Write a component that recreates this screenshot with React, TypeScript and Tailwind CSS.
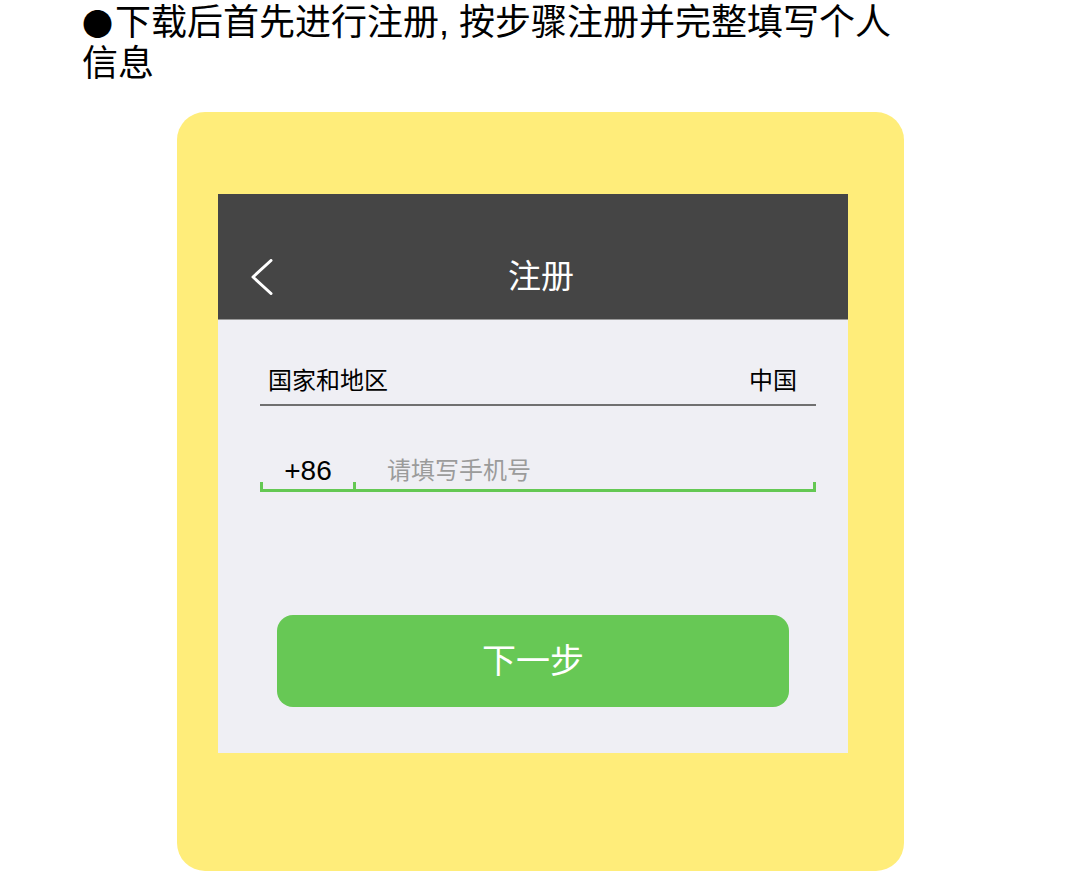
import React from 'react';

const cjk = "font-['Liberation_Sans','Noto_Sans_CJK_SC',sans-serif]";

function BackIcon() {
  return (
    <svg width="24" height="36" viewBox="0 0 24 36" fill="none" className="block">
      <polyline
        points="21,1.5 3,18 21,34.5"
        stroke="#ffffff"
        strokeWidth="3"
        strokeLinecap="round"
        strokeLinejoin="round"
      />
    </svg>
  );
}

export default function App() {
  return (
    <div className={`w-[1080px] h-[876px] bg-white overflow-hidden ${cjk}`}>
      {/* intro line */}
      <p className="pl-[82px] pt-[2px] w-[900px] h-[84px] text-[36px] leading-[41px] text-black">
        <span className="font-['Noto_Sans_CJK_SC',sans-serif] text-[31px] leading-none mr-[2px]">●</span>下载后首先进行注册, 按步骤注册并完整填写个人信息
      </p>

      {/* yellow frame */}
      <div className="ml-[177px] mt-[28px] w-[727px] h-[759px] rounded-[28px] bg-[#ffed7a] pl-[41px] pt-[82px]">
        <div className="w-[630px] h-[559px] bg-[#efeff4] flex flex-col">
          {/* nav bar */}
          <div className="h-[126px] bg-[#454545] border-b border-[#9a9a9a] pt-[40px]">
            <div className="h-[85px] flex items-center relative">
              <div className="pl-[32px]">
                <BackIcon />
              </div>
              <div className="absolute inset-0 pl-[16px] flex items-center justify-center text-white text-[33px] leading-none">
                注册
              </div>
            </div>
          </div>

          {/* country row */}
          <div className="ml-[42px] mr-[32px] mt-[46px] border-b-2 border-[#707070] pb-[8px] flex justify-between text-[24px] leading-[30px] text-black">
            <span className="pl-[8px]">国家和地区</span>
            <span className="pr-[19px]">中国</span>
          </div>

          {/* phone row */}
          <div className="ml-[42px] mr-[32px] mt-[50px]">
            <div className="flex items-center h-[30px]">
              <span className="w-[96px] text-center text-[28px] leading-[30px] text-black">+86</span>
              <span className="pl-[31px] text-[24px] leading-[30px] text-[#9b9b9b]">请填写手机号</span>
            </div>
            <div className="-mt-[4px] h-[10px] flex border-b-[3px] border-l-[3px] border-r-[3px] border-[#64c853]">
              <div className="w-[93px] border-r-[3px] border-[#64c853]" />
            </div>
          </div>

          {/* next button */}
          <div className="mt-[123px] flex justify-center">
            <button className="w-[512px] h-[92px] rounded-[16px] bg-[#67c855] text-white text-[34px] leading-none">
              下一步
            </button>
          </div>
        </div>
      </div>
    </div>
  );
}
